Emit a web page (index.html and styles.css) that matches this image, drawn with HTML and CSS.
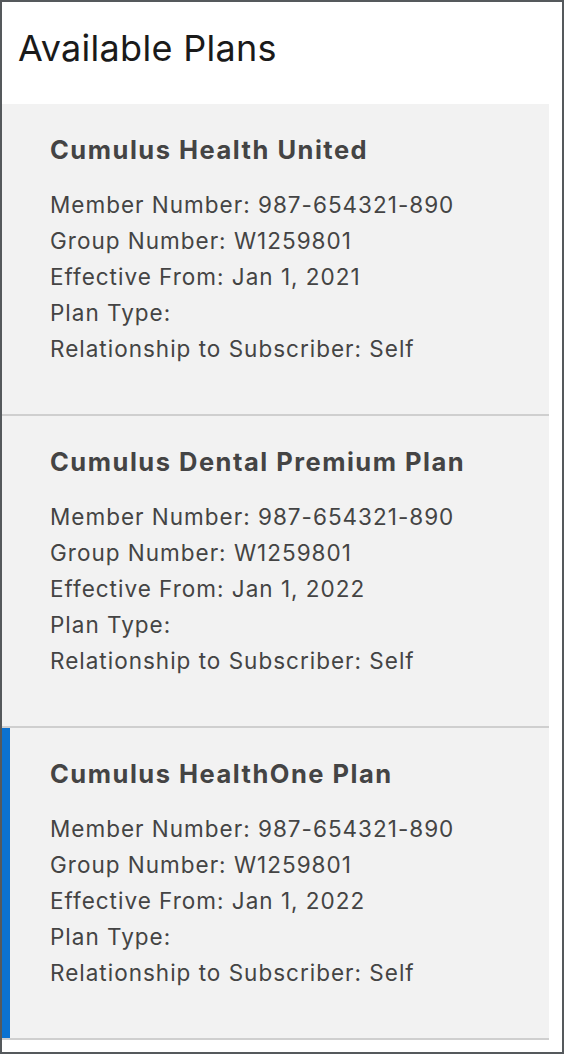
FILE: index.html
```html
<!DOCTYPE html>
<html>
<head>
<meta charset="utf-8">
<link rel="stylesheet" href="styles.css">
</head>
<body>
<div class="frame">
  <h1 class="page-title">Available Plans</h1>
  <ul class="plans">
    <li class="plan">
      <h2 class="plan-name">Cumulus Health United</h2>
      <div class="plan-line">Member Number: 987-654321-890</div>
      <div class="plan-line">Group Number: W1259801</div>
      <div class="plan-line">Effective From: Jan 1, 2021</div>
      <div class="plan-line">Plan Type:</div>
      <div class="plan-line">Relationship to Subscriber: Self</div>
    </li>
    <li class="plan">
      <h2 class="plan-name">Cumulus Dental Premium Plan</h2>
      <div class="plan-line">Member Number: 987-654321-890</div>
      <div class="plan-line">Group Number: W1259801</div>
      <div class="plan-line">Effective From: Jan 1, 2022</div>
      <div class="plan-line">Plan Type:</div>
      <div class="plan-line">Relationship to Subscriber: Self</div>
    </li>
    <li class="plan plan-selected">
      <h2 class="plan-name">Cumulus HealthOne Plan</h2>
      <div class="plan-line">Member Number: 987-654321-890</div>
      <div class="plan-line">Group Number: W1259801</div>
      <div class="plan-line">Effective From: Jan 1, 2022</div>
      <div class="plan-line">Plan Type:</div>
      <div class="plan-line">Relationship to Subscriber: Self</div>
    </li>
  </ul>
</div>
</body>
</html>
```
FILE: styles.css
```css
html, body {
  margin: 0;
  padding: 0;
  background: #ffffff;
}
.frame {
  box-sizing: border-box;
  width: 564px;
  height: 1054px;
  border: 2px solid #55595c;
  font-family: Inter, "Noto Sans", sans-serif;
  overflow: hidden;
}
.page-title {
  margin: 0;
  height: 102px;
  box-sizing: border-box;
  padding: 24px 0 0 16px;
  font-size: 36px;
  font-weight: 400;
  line-height: 44px;
  color: #1a1a1a;
  letter-spacing: 0.3px;
}
.plans {
  list-style: none;
  margin: 0 13px 0 0;
  padding: 0;
}
.plan {
  background: #f2f2f2;
  border-bottom: 2px solid #cfcfcf;
  padding: 30px 48px 0 48px;
  height: 280px;
  color: #444444;
}
.plan-selected {
  box-shadow: inset 8px 0 0 #0b72d1;
}
.plan-name {
  margin: 0 0 21px 0;
  font-size: 25.5px;
  font-weight: 700;
  line-height: 32px;
  letter-spacing: 1.5px;
}
.plan-line {
  font-size: 22.5px;
  line-height: 36px;
  letter-spacing: 1px;
}
```
